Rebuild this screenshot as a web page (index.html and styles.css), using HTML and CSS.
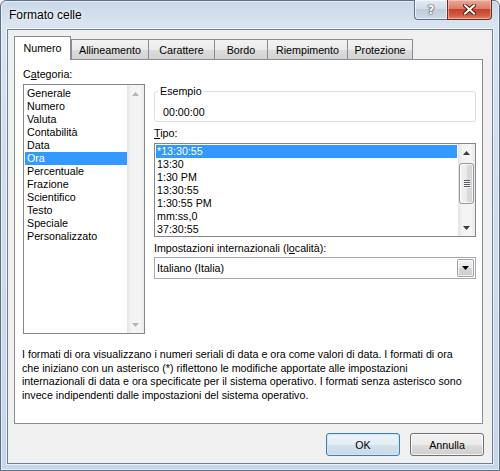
FILE: index.html
```html
<!DOCTYPE html>
<html lang="it">
<head>
<meta charset="utf-8">
<title>Formato celle</title>
<link rel="stylesheet" href="styles.css">
</head>
<body>
<div class="window">
  <div class="titlebar">
    <span class="title">Formato celle</span>
    <div class="caption">
      <div class="cap-btn help"><span class="help-glyph">?</span></div>
      <div class="cap-btn close">
        <svg width="13" height="11" viewBox="0 0 13 11">
          <path d="M2 1.5 L11 9.5 M11 1.5 L2 9.5" stroke="#5a1a10" stroke-width="4" stroke-linecap="square" fill="none"/>
          <path d="M2 1.5 L11 9.5 M11 1.5 L2 9.5" stroke="#ffffff" stroke-width="2" stroke-linecap="square" fill="none"/>
        </svg>
      </div>
    </div>
  </div>
  <div class="client">
    <div class="tabs">
      <div class="tab active w-numero">Numero</div>
      <div class="tab w-allin">Allineamento</div>
      <div class="tab w-carat">Carattere</div>
      <div class="tab w-bordo">Bordo</div>
      <div class="tab w-riemp">Riempimento</div>
      <div class="tab w-prot">Protezione</div>
    </div>
    <div class="panel">
      <div class="cols">
        <div class="col-left">
          <div class="label">C<u>a</u>tegoria:</div>
          <div class="listbox cat">
            <ul class="items">
              <li class="item">Generale</li>
              <li class="item">Numero</li>
              <li class="item">Valuta</li>
              <li class="item">Contabilità</li>
              <li class="item">Data</li>
              <li class="item sel">Ora</li>
              <li class="item">Percentuale</li>
              <li class="item">Frazione</li>
              <li class="item">Scientifico</li>
              <li class="item">Testo</li>
              <li class="item">Speciale</li>
              <li class="item">Personalizzato</li>
            </ul>
            <div class="vscroll disabled">
              <div class="sb-arrow"><svg width="7" height="4" viewBox="0 0 7 4"><path d="M0 4 L3.5 0 L7 4 Z" fill="#b4b4b4"/></svg></div>
              <div class="sb-track"></div>
              <div class="sb-arrow"><svg width="7" height="4" viewBox="0 0 7 4"><path d="M0 0 L7 0 L3.5 4 Z" fill="#b4b4b4"/></svg></div>
            </div>
          </div>
        </div>
        <div class="col-right">
          <fieldset class="group">
            <legend class="legend">Esempio</legend>
            <div class="sample">00:00:00</div>
          </fieldset>
          <div class="label lbl-tipo"><u>T</u>ipo:</div>
          <div class="listbox tipo">
            <ul class="items">
              <li class="item sel">*13:30:55</li>
              <li class="item">13:30</li>
              <li class="item">1:30 PM</li>
              <li class="item">13:30:55</li>
              <li class="item">1:30:55 PM</li>
              <li class="item">mm:ss,0</li>
              <li class="item">37:30:55</li>
            </ul>
            <div class="vscroll">
              <div class="sb-arrow"><svg width="7" height="4" viewBox="0 0 7 4"><path d="M0 4 L3.5 0 L7 4 Z" fill="#3c3c3c"/></svg></div>
              <div class="sb-track">
                <div class="thumb"><div class="grip"></div></div>
              </div>
              <div class="sb-arrow"><svg width="7" height="4" viewBox="0 0 7 4"><path d="M0 0 L7 0 L3.5 4 Z" fill="#3c3c3c"/></svg></div>
            </div>
          </div>
          <div class="label lbl-loc">Impostazioni internazionali (l<u>o</u>calità):</div>
          <div class="combo">
            <span class="combo-text">Italiano (Italia)</span>
            <div class="combo-btn"><svg width="7" height="4" viewBox="0 0 7 4"><path d="M0 0 L7 0 L3.5 4 Z" fill="#000"/></svg></div>
          </div>
        </div>
      </div>
      <p class="desc">I formati di ora visualizzano i numeri seriali di data e ora come valori di data. I formati di ora<br>che iniziano con un asterisco (*) riflettono le modifiche apportate alle impostazioni<br>internazionali di data e ora specificate per il sistema operativo. I formati senza asterisco sono<br>invece indipendenti dalle impostazioni del sistema operativo.</p>
    </div>
    <div class="buttons">
      <button class="btn default">OK</button>
      <button class="btn">Annulla</button>
    </div>
  </div>
</div>
</body>
</html>
```

FILE: styles.css
```css
* { box-sizing: border-box; }
html, body { margin: 0; padding: 0; }
body {
  width: 500px;
  height: 471px;
  overflow: hidden;
  font-family: "Liberation Sans", Arial, sans-serif;
  font-size: 10.7px;
  color: #000;
  background: #ffffff;
}
.window {
  width: 500px;
  height: 471px;
  display: flex;
  flex-direction: column;
  border: 1px solid #5d6f86;
  border-radius: 6px 6px 0 0;
  background: linear-gradient(180deg, #c9d7e8 0%, #d9e4f0 5%, #d2deec 30%, #c6d7eb 100%);
  box-shadow: inset 0 0 0 1px rgba(255,255,255,0.55);
}
.titlebar {
  height: 28px;
  display: flex;
  align-items: flex-start;
  flex-shrink: 0;
}
.title {
  font-size: 12px;
  padding: 7px 0 0 8px;
  line-height: 14px;
  color: #000;
  text-shadow: 0 0 6px #ffffff, 0 0 3px #ffffff;
}
.caption {
  margin-left: auto;
  margin-right: 7px;
  display: flex;
  margin-top: -1px;
}
.cap-btn {
  height: 20px;
  display: flex;
  align-items: center;
  justify-content: center;
  border: 1px solid #60708a;
  border-top: none;
}
.help {
  width: 33px;
  border-radius: 0 0 0 4px;
  border-right: none;
  background: linear-gradient(180deg, #e4ebf3 0%, #d2dce8 45%, #bfcddd 50%, #cbd8e7 100%);
  box-shadow: inset 0 0 0 1px rgba(255,255,255,0.6);
}
.help-glyph {
  font-family: "DejaVu Sans", sans-serif;
  font-weight: bold;
  font-size: 12px;
  color: #ffffff;
  text-shadow: 0 0 1px #3e4a5c, 0 0 1px #3e4a5c, 0 0 2px #3e4a5c;
}
.close {
  width: 45px;
  border-color: #6b2a22;
  border-radius: 0 0 4px 0;
  background: linear-gradient(180deg, #e9a99a 0%, #dc7d68 45%, #c7432e 50%, #d05a40 80%, #e08866 100%);
  box-shadow: inset 0 0 0 1px rgba(255,220,210,0.5);
}
.client {
  flex: 1;
  margin: 0 6px 6px 6px;
  border: 1px solid #6f7f94;
  box-shadow: 0 0 0 1px rgba(255,255,255,0.6);
  background: #f0f0f0;
  padding: 6px 9px 7px 6px;
  display: flex;
  flex-direction: column;
}
.tabs {
  height: 23px;
  display: flex;
  align-items: flex-end;
  flex-shrink: 0;
}
.tab {
  height: 20px;
  border: 1px solid #898c95;
  border-bottom: none;
  background: linear-gradient(180deg, #f3f3f3 0%, #ebebeb 50%, #dddddd 52%, #d2d2d2 100%);
  display: flex;
  align-items: center;
  justify-content: center;
  white-space: nowrap;
  margin-right: -1px;
}
.tab.active {
  height: 24px;
  margin-bottom: -1px;
  background: #ffffff;
  position: relative;
  z-index: 1;
  margin-right: 0;
  padding-bottom: 2px;
}
.w-numero { width: 57px; }
.w-allin { width: 78px; }
.w-carat { width: 67px; }
.w-bordo { width: 54px; }
.w-riemp { width: 81px; }
.w-prot { width: 66px; }
.panel {
  height: 365px;
  flex-shrink: 0;
  border: 1px solid #898c95;
  background: #ffffff;
  padding: 7px 6px 0 8px;
}
.cols {
  display: flex;
  gap: 9px;
}
.col-left { width: 122px; }
.col-right { width: 322px; padding-top: 17px; }
.label {
  line-height: 14px;
  height: 14px;
  white-space: nowrap;
}
.col-left .label { margin-bottom: 3px; }
.listbox {
  display: flex;
  border: 1px solid #828790;
  background: #ffffff;
}
.listbox.cat { height: 250px; }
.listbox.tipo { height: 94px; margin-top: 3px; }
.items {
  flex: 1;
  margin: 0;
  list-style: none;
  overflow: hidden;
  padding: 2px 0 0 1px;
}
.tipo .items { padding: 1px 1px 0 1px; }
.item {
  height: 13px;
  line-height: 13px;
  padding-left: 2px;
  white-space: nowrap;
}
.tipo .item { padding-left: 1px; }
.item.sel { background: #3399ff; color: #ffffff; }
.vscroll {
  width: 17px;
  display: flex;
  flex-direction: column;
  background: linear-gradient(90deg, #e4e4e4 0%, #f3f3f3 25%, #f5f5f5 75%, #ebebeb 100%);
}
.sb-arrow {
  height: 17px;
  display: flex;
  align-items: center;
  justify-content: center;
  flex-shrink: 0;
}
.sb-track { flex: 1; padding: 2px 1px 0 1px; }
.thumb {
  height: 41px;
  border: 1px solid #969696;
  border-radius: 3px;
  background: linear-gradient(90deg, #f4f4f4 0%, #e9e9e9 50%, #dcdcdc 51%, #d2d2d2 100%);
  box-shadow: inset 0 0 0 1px rgba(255,255,255,0.8);
  display: flex;
  align-items: center;
  justify-content: center;
}
.grip {
  width: 6px;
  height: 8px;
  background: repeating-linear-gradient(180deg, #555b66 0, #555b66 1px, #f4f4f4 1px, #f4f4f4 2px);
}
.group {
  margin: 0;
  padding: 0 8px 3px 3px;
  border: 1px solid #d5dfe5;
  border-radius: 3px;
  height: 38px;
}
.legend {
  padding: 0 2px;
  line-height: 14px;
}
.sample {
  line-height: 14px;
  margin: 7px 0 0 5px;
}
.lbl-tipo { margin-top: 4px; }
.lbl-loc { margin-top: 4px; }
.combo {
  margin-top: 2px;
  height: 22px;
  border: 1px solid #a6abb3;
  background: #ffffff;
  display: flex;
  align-items: center;
  padding-left: 2px;
}
.combo-text { flex: 1; }
.combo-btn {
  width: 17px;
  height: 18px;
  margin-right: 1px;
  border: 1px solid #9ea4ad;
  border-radius: 2px;
  background: linear-gradient(180deg, #f2f2f2 0%, #e6e6e6 50%, #d6d6d6 51%, #cdcdcd 100%);
  box-shadow: inset 0 0 0 1px rgba(255,255,255,0.7);
  display: flex;
  align-items: center;
  justify-content: center;
}
.desc {
  margin: 14px 0 0 -1px;
  line-height: 13.7px;
  white-space: nowrap;
}
.buttons {
  margin-top: 9px;
  margin-right: -1px;
  display: flex;
  justify-content: flex-end;
  gap: 10px;
}
.btn {
  width: 74px;
  height: 23px;
  font: inherit;
  color: #000;
  border: 1px solid #707070;
  border-radius: 3px;
  background: linear-gradient(180deg, #f2f2f2 0%, #ebebeb 50%, #dddddd 51%, #cfcfcf 100%);
  box-shadow: inset 0 0 0 1px rgba(255,255,255,0.75);
  padding: 0;
}
.btn.default {
  border-color: #3c7fb1;
  background: linear-gradient(180deg, #eef4f9 0%, #e3edf5 50%, #d3e2ee 51%, #c8d9e7 100%);
  box-shadow: inset 0 0 0 1px #cfe6f6;
}
```
